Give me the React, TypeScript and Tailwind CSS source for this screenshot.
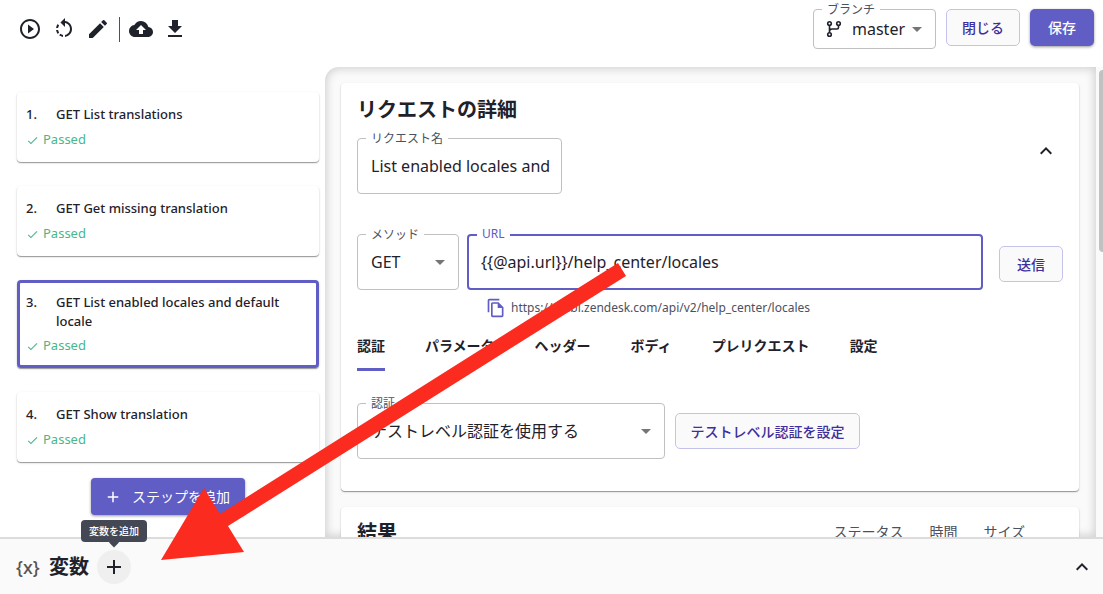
import { ReactNode } from "react";
import {
  MdAdd,
  MdArrowDropDown,
  MdCheck,
  MdCloudUpload,
  MdEdit,
  MdFileDownload,
  MdKeyboardArrowUp,
  MdOutlineFileCopy,
  MdPlayCircleOutline,
  MdRotateLeft,
} from "react-icons/md";

type Step = {
  name: string;
  selected?: boolean;
};

const steps: Step[] = [
  { name: "GET List translations" },
  { name: "GET Get missing translation" },
  { name: "GET List enabled locales and default locale", selected: true },
  { name: "GET Show translation" },
];

const tabs = ["認証", "パラメータ", "ヘッダー", "ボディ", "プレリクエスト", "設定"];

const cardShadow = "shadow-[0_1px_1px_rgba(0,0,0,0.36),0_1px_3px_rgba(0,0,0,0.1)]";

type FieldProps = {
  id: string;
  label: string;
  className: string;
  active?: boolean;
  children: ReactNode;
};

// Outlined box with the label sitting in the top border
function Field({ id, label, className, active, children }: FieldProps) {
  return (
    <div
      className={`relative flex items-center rounded bg-white ${
        active ? "border-2 border-[#605dc4]" : "border border-[#c0c0c0]"
      } ${className}`}
    >
      <label
        htmlFor={id}
        className={`absolute left-2 bg-white px-[5px] text-[12px] leading-4 ${
          active ? "-top-[10px] text-[#605dc4]" : "-top-2 text-[#4b5162]"
        }`}
      >
        {label}
      </label>
      {children}
    </div>
  );
}

type SelectProps = {
  id: string;
  value: string;
  className: string;
};

function Select({ id, value, className }: SelectProps) {
  return (
    <>
      <select
        id={id}
        defaultValue={value}
        className={`h-full w-full appearance-none bg-transparent text-[16px] outline-none ${className}`}
      >
        <option>{value}</option>
      </select>
      <MdArrowDropDown className="pointer-events-none absolute right-[6px] size-6 text-[#757575]" />
    </>
  );
}

function BranchIcon() {
  return (
    <svg
      className="pointer-events-none absolute left-3 size-[18px]"
      viewBox="0 0 18 18"
      fill="none"
      stroke="currentColor"
      strokeWidth="1.6"
      aria-hidden="true"
    >
      <circle cx="3.5" cy="3.5" r="1.8" />
      <circle cx="3.5" cy="14.5" r="1.8" />
      <circle cx="12.5" cy="3.5" r="1.8" />
      <path d="M3.5 5.3V12.7M12.5 5.3V7.5Q12.5 9 11 9H6Q3.5 9 3.5 11.5" />
    </svg>
  );
}

const outlineButton =
  "shrink-0 rounded-[5px] border border-[#c5c3ec] bg-[#fafafa] text-[14px] font-medium text-[#3f2f9e]";

function StepCard({ step, index }: { step: Step; index: number }) {
  return (
    <li
      className={`flex flex-col gap-[5px] rounded bg-white pt-[13px] pb-3 pl-[9px] pr-4 text-[13px] ${cardShadow} ${
        step.selected ? "outline-3 -outline-offset-3 outline-[#605dc4]" : ""
      }`}
    >
      <div className="flex min-h-5 font-medium leading-[19px]">
        <span className="w-[30px] shrink-0">{index + 1}.</span>
        <span>{step.name}</span>
      </div>
      <div className="flex h-5 items-center gap-1 text-[#48b78c]">
        <MdCheck className="size-[13px]" />
        Passed
      </div>
    </li>
  );
}

function Header() {
  return (
    <header className="flex h-[67px] shrink-0 items-start justify-between pr-[9px] pl-[18px] pt-[9px]">
      <div className="flex h-10 items-center gap-[10px]">
        <button aria-label="実行"><MdPlayCircleOutline className="size-6" /></button>
        <button aria-label="元に戻す"><MdRotateLeft className="size-6" /></button>
        <button aria-label="編集"><MdEdit className="size-6" /></button>
        <div className="-mx-[1px] h-[25px] w-px bg-[#4b5162]" />
        <button aria-label="アップロード"><MdCloudUpload className="size-6" /></button>
        <button aria-label="ダウンロード"><MdFileDownload className="size-6" /></button>
      </div>
      <div className="flex items-start gap-[10px]">
        <Field id="branch" label="ブランチ" className="h-10 w-[123px]">
          <BranchIcon />
          <Select id="branch" value="master" className="pl-[38px]" />
        </Field>
        <button className={`h-[37px] w-[74px] ${outlineButton}`}>閉じる</button>
        <button className="h-[37px] w-16 rounded-[5px] bg-[#605dc4] text-[14px] font-medium text-white shadow-[0_1px_3px_rgba(0,0,0,0.4)]">
          保存
        </button>
      </div>
    </header>
  );
}

function Sidebar() {
  return (
    <aside className="flex w-[325px] shrink-0 flex-col items-center gap-4 pt-[25px] pr-[6px] pl-[17px]">
      <ol className="flex w-full flex-col gap-6">
        {steps.map((step, i) => (
          <StepCard key={step.name} step={step} index={i} />
        ))}
      </ol>
      <button className="flex h-[37px] w-[154px] shrink-0 items-center gap-[10px] rounded bg-[#605dc4] pl-[13px] text-[14px] text-white shadow-[0_1px_3px_rgba(0,0,0,0.4)]">
        <MdAdd className="size-[18px]" />
        ステップを追加
      </button>
    </aside>
  );
}

function RequestCard() {
  return (
    <section className={`shrink-0 rounded bg-white px-4 pt-3 pb-8 ${cardShadow}`}>
      <div className="flex items-center justify-between pr-[5px]">
        <div>
          <h2 className="text-[20px] font-bold leading-[30px]">リクエストの詳細</h2>
          <Field id="name" label="リクエスト名" className="mt-[13px] h-14 w-[205px]">
            <input
              id="name"
              defaultValue="List enabled locales and"
              className="w-full bg-transparent pr-[10px] pl-[13px] text-[16px] outline-none"
            />
          </Field>
        </div>
        <button aria-label="折りたたむ" className="pt-3"><MdKeyboardArrowUp className="size-6" /></button>
      </div>

      <div className="mt-10 flex items-center">
        <Field id="method" label="メソッド" className="h-14 w-[102px]">
          <Select id="method" value="GET" className="pl-[13px]" />
        </Field>
        <Field id="url" label="URL" active className="ml-2 h-14 flex-1">
          <input
            id="url"
            defaultValue="{{@api.url}}/help_center/locales"
            className="w-full bg-transparent px-3 text-[16px] outline-none"
          />
        </Field>
        <button className={`mt-1 ml-4 h-9 w-16 ${outlineButton}`}>送信</button>
      </div>

      <div className="mt-2 flex items-center gap-[5px] pl-[129px] text-[12px] leading-5 text-[#4b5162]">
        <button aria-label="コピー"><MdOutlineFileCopy className="size-5 text-[#605dc4]" /></button>
        https://mabl.zendesk.com/api/v2/help_center/locales
      </div>

      <div className="mt-4 flex gap-10">
        {tabs.map((tab, i) => (
          <button
            key={tab}
            className={`h-[37px] border-b-3 pb-3 text-[14px] font-bold ${
              i === 0 ? "border-[#605dc4]" : "border-transparent"
            }`}
          >
            {tab}
          </button>
        ))}
      </div>

      <div className="mt-8 flex items-center gap-[10px]">
        <Field id="auth" label="認証" className="h-14 w-[308px]">
          <Select id="auth" value="テストレベル認証を使用する" className="pl-[13px]" />
        </Field>
        <button className={`h-9 w-[185px] ${outlineButton}`}>テストレベル認証を設定</button>
      </div>
    </section>
  );
}

function ResultCard() {
  return (
    <section className={`flex shrink-0 items-start justify-between rounded bg-white pt-[11px] pr-[54px] pb-4 pl-4 ${cardShadow}`}>
      <h2 className="text-[20px] font-bold leading-[30px]">結果</h2>
      <div className="flex gap-[26px] text-[14px] leading-7 text-[#4b5162]">
        <span>ステータス</span>
        <span>時間</span>
        <span>サイズ</span>
      </div>
    </section>
  );
}

function VariablesBar() {
  return (
    <footer className="flex h-[57px] shrink-0 items-center border-t-2 border-[#dcdcdc] bg-[#fafafa] pr-[9px] pl-4">
      <span className="w-[33px] text-[18px] font-medium leading-6 text-[#555]">{"{x}"}</span>
      <h2 className="text-[20px] font-bold">変数</h2>
      <div className="relative ml-2">
        <button aria-label="変数を追加" className="flex size-[34px] items-center justify-center rounded-full bg-[#efefef]">
          <MdAdd className="size-6" />
        </button>
        <div
          role="tooltip"
          className="absolute bottom-full left-1/2 mb-2 -translate-x-1/2 rounded bg-[#444854] px-2 text-[10px] font-medium leading-[22px] whitespace-nowrap text-white"
        >
          変数を追加
          <span className="absolute -bottom-1 left-1/2 size-[7px] -translate-x-1/2 rotate-45 bg-[#444854]" />
        </div>
      </div>
      <button aria-label="展開" className="ml-auto"><MdKeyboardArrowUp className="size-6" /></button>
    </footer>
  );
}

export default function App() {
  return (
    <div className="relative flex h-screen flex-col overflow-hidden bg-white font-['Noto_Sans','Noto_Sans_CJK_JP',sans-serif] text-[#1f222b]">
      <Header />
      <div className="flex min-h-0 flex-1">
        <Sidebar />
        <main className="flex min-w-0 flex-1 flex-col gap-4 overflow-hidden rounded-tl-[14px] bg-[#fafafa] pt-4 pr-[17px] pl-4 shadow-[inset_0_0_8px_2px_rgba(0,0,0,0.16)]">
          <RequestCard />
          <ResultCard />
        </main>
        <div className="w-[7px] shrink-0 bg-[#fafafa] pt-[3px] pl-[3px]">
          <div className="h-[182px] rounded-l bg-[#c1c1c1]" />
        </div>
      </div>
      <VariablesBar />

      {/* pointer to the add-variable button */}
      <svg
        className="pointer-events-none absolute top-0 left-0"
        width="640"
        height="594"
        viewBox="0 0 640 594"
        aria-hidden="true"
      >
        <path d="M618 263 626 276 228 526 244 552 161 560 204 488 220 514Z" fill="#fb2b1f" />
      </svg>
    </div>
  );
}
